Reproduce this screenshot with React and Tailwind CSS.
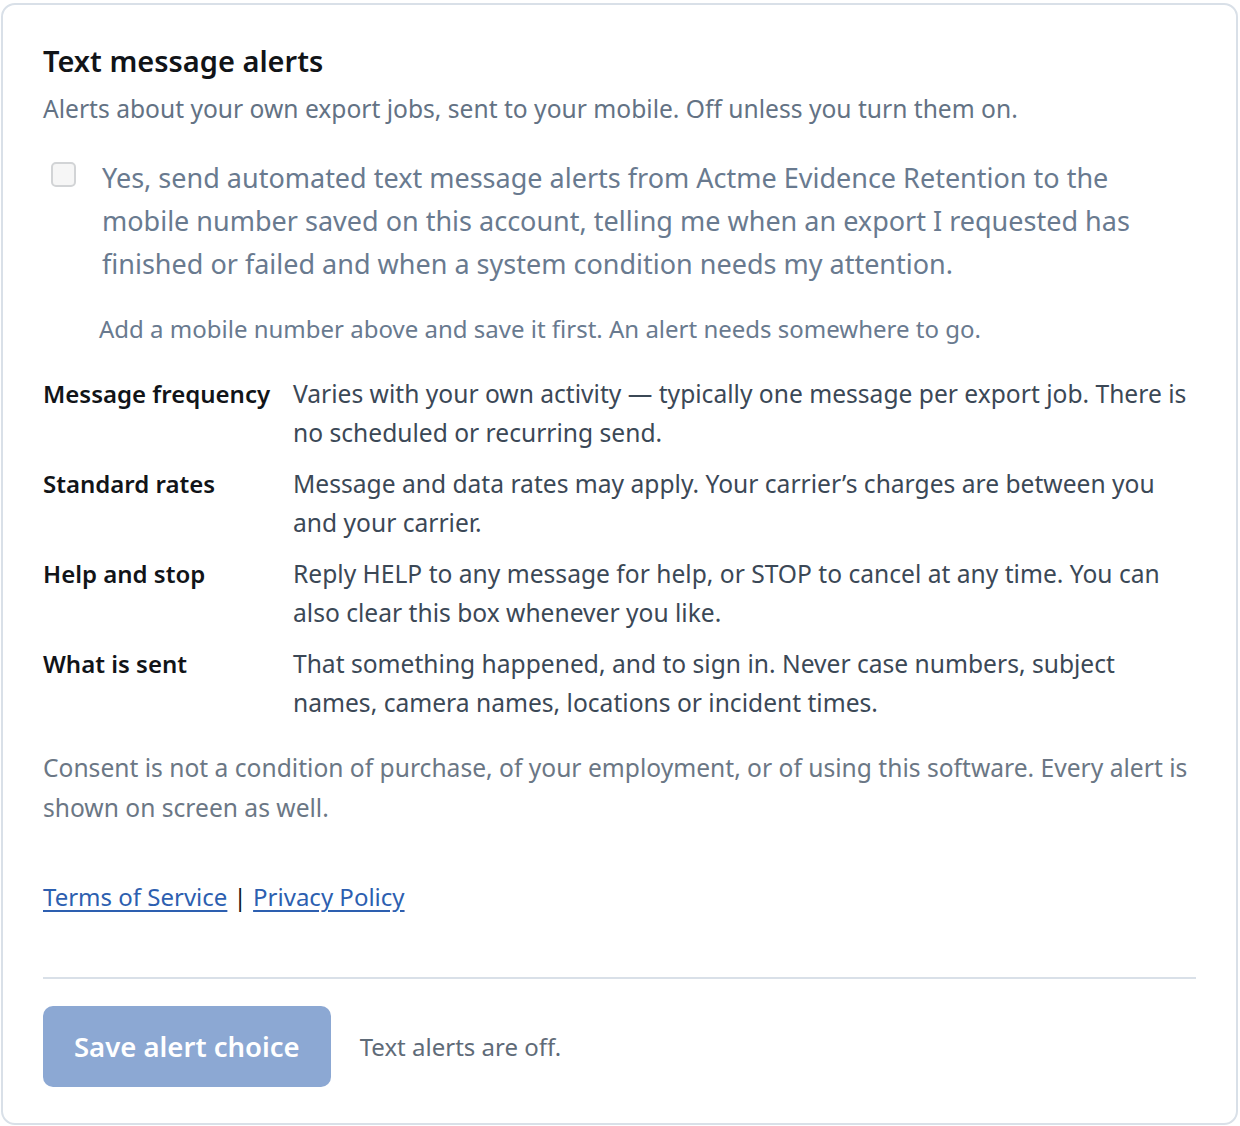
export default function App() {
  return (
    <div className="bg-white pt-[3px] pl-px pr-[2px]" style={{ fontFamily: '"Noto Sans", "Open Sans", sans-serif' }}>
      <section className="rounded-[14px] border-2 border-[#d9e0e8] px-[40px] pt-[36px] pb-[36px]">
        <h2 className="text-[29px] font-semibold leading-[40px] text-[#111418]">Text message alerts</h2>
        <p className="mt-[9px] text-[24.6px] leading-[38px] text-[#637284]">
          Alerts about your own export jobs, sent to your mobile. Off unless you turn them on.
        </p>

        <label className="mt-[28px] flex items-start gap-[26px] pl-[8px] pr-[36px]">
          <input
            type="checkbox"
            disabled
            className="mt-[6px] h-[25px] w-[25px] shrink-0 appearance-none rounded-[5px] border-2 border-[#d2d4d6] bg-[#f6f6f6]"
          />
          <span className="text-[27px] leading-[43px] text-[#697a8f]">
            Yes, send automated text message alerts from Actme Evidence Retention to the mobile number saved on
            this account, telling me when an export I requested has finished or failed and when a system
            condition needs my attention.
          </span>
        </label>

        <p className="mt-[25px] pl-[56px] text-[24px] leading-[38px] text-[#697a8f]">
          Add a mobile number above and save it first. An alert needs somewhere to go.
        </p>

        <dl className="mt-[26px] grid grid-cols-[250px_1fr] gap-y-[12px] text-[24.6px] leading-[39px]">
          <dt className="text-[24px] font-semibold text-[#111418]">Message frequency</dt>
          <dd className="text-[#3b4856]">
            Varies with your own activity — typically one message per export job. There is no scheduled or
            recurring send.
          </dd>
          <dt className="text-[24px] font-semibold text-[#111418]">Standard rates</dt>
          <dd className="text-[#3b4856]">
            Message and data rates may apply. Your carrier’s charges are between you and your carrier.
          </dd>
          <dt className="text-[24px] font-semibold text-[#111418]">Help and stop</dt>
          <dd className="text-[#3b4856]">
            Reply HELP to any message for help, or STOP to cancel at any time. You can also clear this box
            whenever you like.
          </dd>
          <dt className="text-[24px] font-semibold text-[#111418]">What is sent</dt>
          <dd className="text-[#3b4856]">
            That something happened, and to sign in. Never case numbers, subject names, camera names, locations
            or incident times.
          </dd>
        </dl>

        <p className="mt-[26px] text-[24.6px] leading-[40px] text-[#6b7785]">
          Consent is not a condition of purchase, of your employment, or of using this software. Every alert is
          shown on screen as well.
        </p>

        <p className="mt-[50px] text-[24px] leading-[38px] text-[#111418]">
          <a href="#" className="text-[#2d5fb0] underline underline-offset-[4px]">Terms of Service</a>
          {" | "}
          <a href="#" className="text-[#2d5fb0] underline underline-offset-[4px]">Privacy Policy</a>
        </p>

        <div className="mt-[61px] border-t-2 border-[#d9e0e8]" />

        <div className="mt-[27px] flex items-center gap-[29px]">
          <button
            type="button"
            disabled
            className="h-[81px] rounded-[10px] bg-[#8ca8d3] px-[31px] text-[27.5px] font-semibold text-white"
          >
            Save alert choice
          </button>
          <span className="text-[24px] text-[#5f6b78]">Text alerts are off.</span>
        </div>
      </section>
    </div>
  );
}
